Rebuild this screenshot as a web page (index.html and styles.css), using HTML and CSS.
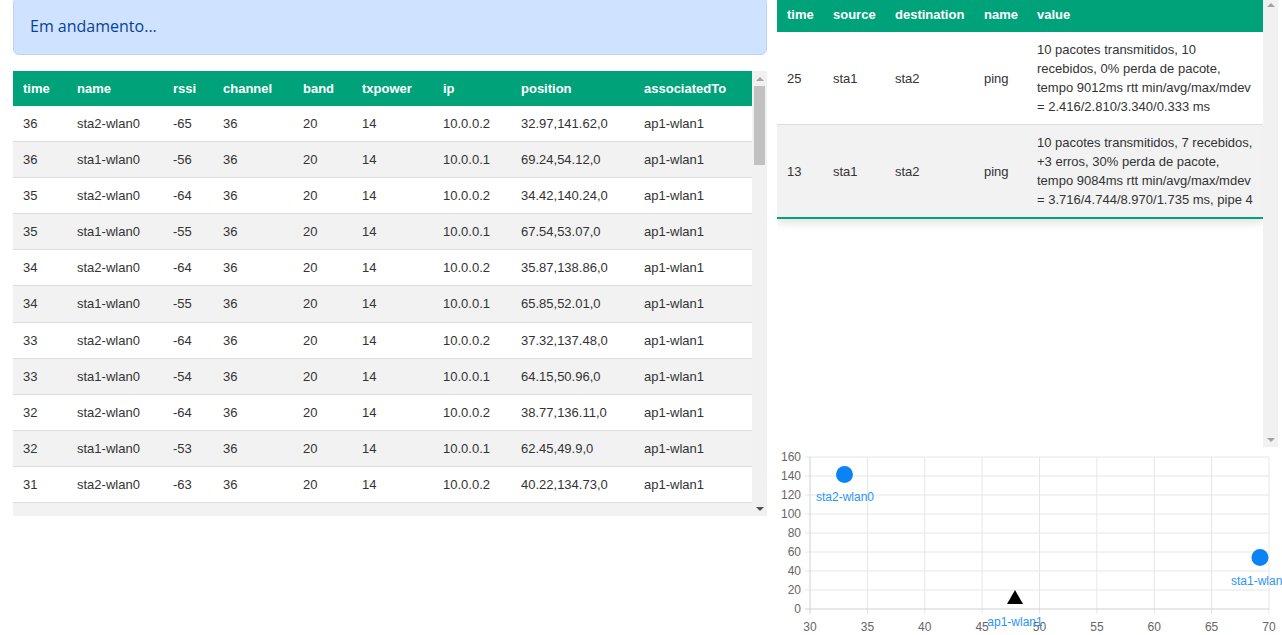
FILE: index.html
```html
<!DOCTYPE html>
<html lang="pt">
<head>
<meta charset="utf-8">
<title>Monitor</title>
<link rel="stylesheet" href="styles.css">
</head>
<body>
<div class="page">
  <div class="left">
    <div class="alert">Em andamento...</div>
    <div class="scrollbox left-box">
      <div class="view">
        <table class="grid stations">
          <colgroup>
            <col class="c-time"><col class="c-name"><col class="c-rssi"><col class="c-channel"><col class="c-band"><col class="c-tx"><col class="c-ip"><col class="c-pos"><col class="c-assoc">
          </colgroup>
          <thead>
            <tr><th>time</th><th>name</th><th>rssi</th><th>channel</th><th>band</th><th>txpower</th><th>ip</th><th>position</th><th>associatedTo</th></tr>
          </thead>
          <tbody>
            <tr><td>36</td><td>sta2-wlan0</td><td>-65</td><td>36</td><td>20</td><td>14</td><td>10.0.0.2</td><td>32.97,141.62,0</td><td>ap1-wlan1</td></tr>
            <tr><td>36</td><td>sta1-wlan0</td><td>-56</td><td>36</td><td>20</td><td>14</td><td>10.0.0.1</td><td>69.24,54.12,0</td><td>ap1-wlan1</td></tr>
            <tr><td>35</td><td>sta2-wlan0</td><td>-64</td><td>36</td><td>20</td><td>14</td><td>10.0.0.2</td><td>34.42,140.24,0</td><td>ap1-wlan1</td></tr>
            <tr><td>35</td><td>sta1-wlan0</td><td>-55</td><td>36</td><td>20</td><td>14</td><td>10.0.0.1</td><td>67.54,53.07,0</td><td>ap1-wlan1</td></tr>
            <tr><td>34</td><td>sta2-wlan0</td><td>-64</td><td>36</td><td>20</td><td>14</td><td>10.0.0.2</td><td>35.87,138.86,0</td><td>ap1-wlan1</td></tr>
            <tr><td>34</td><td>sta1-wlan0</td><td>-55</td><td>36</td><td>20</td><td>14</td><td>10.0.0.1</td><td>65.85,52.01,0</td><td>ap1-wlan1</td></tr>
            <tr><td>33</td><td>sta2-wlan0</td><td>-64</td><td>36</td><td>20</td><td>14</td><td>10.0.0.2</td><td>37.32,137.48,0</td><td>ap1-wlan1</td></tr>
            <tr><td>33</td><td>sta1-wlan0</td><td>-54</td><td>36</td><td>20</td><td>14</td><td>10.0.0.1</td><td>64.15,50.96,0</td><td>ap1-wlan1</td></tr>
            <tr><td>32</td><td>sta2-wlan0</td><td>-64</td><td>36</td><td>20</td><td>14</td><td>10.0.0.2</td><td>38.77,136.11,0</td><td>ap1-wlan1</td></tr>
            <tr><td>32</td><td>sta1-wlan0</td><td>-53</td><td>36</td><td>20</td><td>14</td><td>10.0.0.1</td><td>62.45,49.9,0</td><td>ap1-wlan1</td></tr>
            <tr><td>31</td><td>sta2-wlan0</td><td>-63</td><td>36</td><td>20</td><td>14</td><td>10.0.0.2</td><td>40.22,134.73,0</td><td>ap1-wlan1</td></tr>
            <tr><td>31</td><td>sta1-wlan0</td><td>-53</td><td>36</td><td>20</td><td>14</td><td>10.0.0.1</td><td>60.75,48.85,0</td><td>ap1-wlan1</td></tr>
          </tbody>
        </table>
      </div>
      <div class="scrollbar">
        <div class="sb-btn"><span class="arrow-up"></span></div>
        <div class="sb-track"><div class="sb-thumb"></div></div>
        <div class="sb-btn"><span class="arrow-down active"></span></div>
      </div>
    </div>
  </div>

  <div class="right">
    <div class="scrollbox right-box">
      <div class="view">
        <table class="grid events">
          <colgroup>
            <col class="e-time"><col class="e-src"><col class="e-dst"><col class="e-name"><col class="e-val">
          </colgroup>
          <thead>
            <tr><th>time</th><th>source</th><th>destination</th><th>name</th><th>value</th></tr>
          </thead>
          <tbody>
            <tr><td>25</td><td>sta1</td><td>sta2</td><td>ping</td><td>10 pacotes transmitidos, 10 recebidos, 0% perda de pacote, tempo 9012ms rtt min/avg/max/mdev = 2.416/2.810/3.340/0.333 ms</td></tr>
            <tr><td>13</td><td>sta1</td><td>sta2</td><td>ping</td><td>10 pacotes transmitidos, 7 recebidos, +3 erros, 30% perda de pacote, tempo 9084ms rtt min/avg/max/mdev = 3.716/4.744/8.970/1.735 ms, pipe 4</td></tr>
          </tbody>
        </table>
      </div>
      <div class="scrollbar">
        <div class="sb-btn"><span class="arrow-up"></span></div>
        <div class="sb-track"></div>
        <div class="sb-btn"><span class="arrow-down"></span></div>
      </div>
    </div>

    <svg class="chart" width="505" height="188" viewBox="777 447 505 188" xmlns="http://www.w3.org/2000/svg">
      <g class="gridlines">
        <line x1="805" y1="457" x2="1269" y2="457"/>
        <line x1="805" y1="476" x2="1269" y2="476"/>
        <line x1="805" y1="495" x2="1269" y2="495"/>
        <line x1="805" y1="514" x2="1269" y2="514"/>
        <line x1="805" y1="533" x2="1269" y2="533"/>
        <line x1="805" y1="552" x2="1269" y2="552"/>
        <line x1="805" y1="571" x2="1269" y2="571"/>
        <line x1="805" y1="590" x2="1269" y2="590"/>
        <line x1="867.4" y1="457" x2="867.4" y2="614"/>
        <line x1="924.8" y1="457" x2="924.8" y2="614"/>
        <line x1="982.1" y1="457" x2="982.1" y2="614"/>
        <line x1="1039.5" y1="457" x2="1039.5" y2="614"/>
        <line x1="1096.9" y1="457" x2="1096.9" y2="614"/>
        <line x1="1154.3" y1="457" x2="1154.3" y2="614"/>
        <line x1="1211.6" y1="457" x2="1211.6" y2="614"/>
        <line x1="1269" y1="457" x2="1269" y2="614"/>
      </g>
      <g class="axes">
        <line x1="810" y1="457" x2="810" y2="614"/>
        <line x1="805" y1="609" x2="1269" y2="609"/>
      </g>
      <g class="ylabels">
        <text x="801" y="457">160</text>
        <text x="801" y="476">140</text>
        <text x="801" y="495">120</text>
        <text x="801" y="514">100</text>
        <text x="801" y="533">80</text>
        <text x="801" y="552">60</text>
        <text x="801" y="571">40</text>
        <text x="801" y="590">20</text>
        <text x="801" y="609">0</text>
      </g>
      <g class="xlabels">
        <text x="810" y="627">30</text>
        <text x="867.4" y="627">35</text>
        <text x="924.8" y="627">40</text>
        <text x="982.1" y="627">45</text>
        <text x="1039.5" y="627">50</text>
        <text x="1096.9" y="627">55</text>
        <text x="1154.3" y="627">60</text>
        <text x="1211.6" y="627">65</text>
        <text x="1269" y="627">70</text>
      </g>
      <circle class="sta" cx="844.5" cy="474.5" r="8.5"/>
      <circle class="sta" cx="1260" cy="557.5" r="8.5"/>
      <polygon class="ap" points="1007,604 1023,604 1015,590"/>
      <g class="plabels">
        <text x="845" y="497">sta2-wlan0</text>
        <text x="1260" y="581">sta1-wlan0</text>
        <text x="1015" y="622">ap1-wlan1</text>
      </g>
    </svg>
  </div>
</div>
</body>
</html>
```

FILE: styles.css
```css
html, body {
  margin: 0;
  padding: 0;
  overflow: hidden;
  background: #ffffff;
}

body {
  font-family: "Liberation Sans", Arial, sans-serif;
  font-size: 13px;
  color: #333333;
}

.page {
  display: flex;
  gap: 10px;
  margin-top: -3px;
  padding-left: 13px;
  width: 1282px;
  box-sizing: border-box;
}

.left {
  width: 754px;
  flex: none;
  display: flex;
  flex-direction: column;
}

.right {
  width: 505px;
  flex: none;
  display: flex;
  flex-direction: column;
}

.alert {
  background: #cfe2ff;
  border: 1px solid #b6d4fe;
  border-radius: 6px;
  color: #084298;
  font-family: "Open Sans", "Noto Sans", sans-serif;
  font-size: 16px;
  line-height: 24px;
  padding: 16px 16px;
  margin-bottom: 16px;
}

/* scroll containers with a drawn scrollbar */
.scrollbox {
  display: flex;
}

.view {
  flex: 1;
  min-width: 0;
  overflow: hidden;
}

.left-box {
  height: 445px;
}

.right-box {
  height: 450px;
  width: 501px;
}

.scrollbar {
  width: 15px;
  flex: none;
  display: flex;
  flex-direction: column;
  background: #f1f1f1;
}

.sb-btn {
  height: 15px;
  flex: none;
  display: flex;
  align-items: center;
  justify-content: center;
}

.sb-track {
  flex: 1;
  padding: 0 2px;
}

.sb-thumb {
  height: 79px;
  background: #c1c1c1;
}

.arrow-up {
  width: 0;
  height: 0;
  border-left: 4px solid transparent;
  border-right: 4px solid transparent;
  border-bottom: 4px solid #a3a3a3;
}

.arrow-down {
  width: 0;
  height: 0;
  border-left: 4px solid transparent;
  border-right: 4px solid transparent;
  border-top: 4px solid #a3a3a3;
}

.arrow-down.active {
  border-top-color: #505050;
}

/* tables */
.grid {
  border-collapse: collapse;
  table-layout: fixed;
  width: 100%;
}

.grid th {
  background: #00a27a;
  color: #ffffff;
  font-weight: bold;
  text-align: left;
  padding: 10px 10px;
  line-height: 15px;
}

.grid td {
  padding: 10px 10px;
  line-height: 15.1px;
  border-bottom: 1px solid #dddddd;
  vertical-align: middle;
}

.grid tbody tr:nth-child(even) td {
  background: #f2f2f2;
}

.c-time { width: 54px; }
.c-name { width: 96px; }
.c-rssi { width: 50px; }
.c-channel { width: 80px; }
.c-band { width: 59px; }
.c-tx { width: 81px; }
.c-ip { width: 78px; }
.c-pos { width: 123px; }
.c-assoc { width: 118px; }

.right-box .view {
  padding-bottom: 12px;
}

.events {
  width: 486px;
  box-shadow: 0 3px 10px rgba(0, 0, 0, 0.14);
}

.e-time { width: 46px; }
.e-src { width: 62px; }
.e-dst { width: 89px; }
.e-name { width: 53px; }
.e-val { width: 236px; }

.events td {
  padding: 8px 10px;
  line-height: 19px;
}

.events tbody tr:last-child td {
  border-bottom: 2px solid #00a27a;
}

/* chart */
.chart {
  display: block;
  overflow: hidden;
  font-family: "Liberation Sans", Arial, sans-serif;
}

.gridlines line {
  stroke: #e6e6e6;
  stroke-width: 1;
}

.axes line {
  stroke: #d0d0d0;
  stroke-width: 1;
}

.ylabels text {
  font-size: 12px;
  fill: #666666;
  text-anchor: end;
  dominant-baseline: central;
}

.xlabels text {
  font-size: 12px;
  fill: #666666;
  text-anchor: middle;
  dominant-baseline: central;
}

.sta {
  fill: #0a84f5;
}

.ap {
  fill: #000000;
}

.plabels text {
  font-size: 12px;
  fill: #2b95f7;
  text-anchor: middle;
  dominant-baseline: central;
}
```
